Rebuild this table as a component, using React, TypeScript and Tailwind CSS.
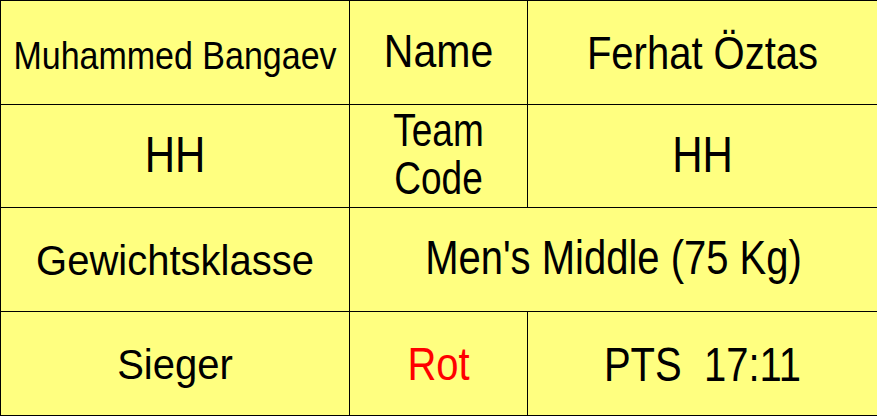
import type { ReactNode } from "react";

// The reference text is Arial-like but stretched vertically per cell,
// so every label gets its own scale-y.
function Txt({ className = "", children }: { className?: string; children: ReactNode }) {
  return <span className={`inline-block origin-center ${className}`}>{children}</span>;
}

export default function App() {
  const cell = "border border-black text-center align-middle p-0";
  return (
    <div className="w-[877px] h-[416px] bg-white" style={{ fontFamily: "'Liberation Sans', Arial, sans-serif" }}>
      <table className="w-[877px] h-[416px] border-collapse table-fixed bg-[#ffff80] text-black text-[40px] leading-[1.15]">
        <colgroup>
          <col className="w-[349px]" />
          <col className="w-[178px]" />
          <col className="w-[350px]" />
        </colgroup>
        <tbody>
          <tr className="h-[104px]">
            <td className={cell}>
              <Txt className="text-[34px] scale-y-[1.14]">Muhammed Bangaev</Txt>
            </td>
            <td className={cell}>
              <Txt className="text-[41px] scale-y-[1.12] translate-y-[-1px]">Name</Txt>
            </td>
            <td className={cell}>
              <Txt className="scale-y-[1.15]">Ferhat Öztas</Txt>
            </td>
          </tr>
          <tr className="h-[103px]">
            <td className={cell}>
              <Txt className="text-[42px] scale-y-[1.18]">HH</Txt>
            </td>
            <td className={cell}>
              <Txt className="text-[37px] leading-[1.03] scale-y-[1.26]">
                Team
                <br />
                Code
              </Txt>
            </td>
            <td className={cell}>
              <Txt className="text-[42px] scale-y-[1.18]">HH</Txt>
            </td>
          </tr>
          <tr className="h-[104px]">
            <td className={cell}>
              <Txt className="scale-y-[1.05]">Gewichtsklasse</Txt>
            </td>
            <td className={cell} colSpan={2}>
              <Txt className="scale-y-[1.18] translate-y-[-3px]">Men's Middle (75 Kg)</Txt>
            </td>
          </tr>
          <tr className="h-[104px]">
            <td className={cell}>
              <Txt className="scale-y-[1.05]">Sieger</Txt>
            </td>
            <td className={`${cell} text-[#ff0000]`}>
              <Txt className="scale-y-[1.16]">Rot</Txt>
            </td>
            <td className={cell}>
              <Txt className="whitespace-pre scale-y-[1.2]">PTS  17:11</Txt>
            </td>
          </tr>
        </tbody>
      </table>
    </div>
  );
}
